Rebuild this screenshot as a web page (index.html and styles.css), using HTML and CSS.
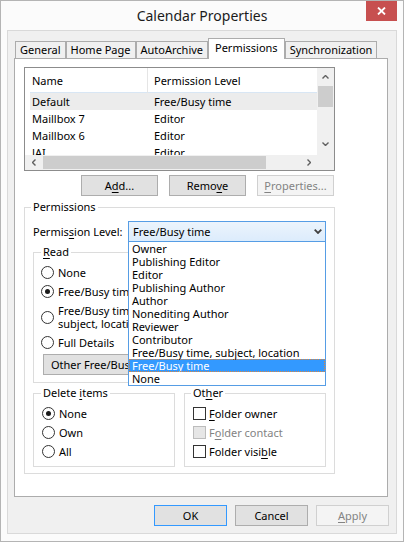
FILE: index.html
```html
<!DOCTYPE html>
<html lang="en">
<head>
    <meta charset="UTF-8">
    <title>Calendar Properties</title>
    <link rel="stylesheet" href="styles.css">
</head>
<body>
<div class="window">
    <div class="titlebar">
        <span class="title">Calendar Properties</span>
        <div class="close">
            <svg width="9" height="8" viewBox="0 0 9 8"><path d="M1 0.5 L8 7.5 M8 0.5 L1 7.5"/></svg>
        </div>
    </div>

    <div class="client">
        <div class="tabs">
            <div class="tab">General</div>
            <div class="tab">Home Page</div>
            <div class="tab">AutoArchive</div>
            <div class="tab active">Permissions</div>
            <div class="tab">Synchronization</div>
        </div>

        <div class="panel">
            <div class="panel-body">
                <div class="listview">
                    <div class="list-body">
                        <div class="list-head">
                            <span>Name</span>
                            <span>Permission Level</span>
                        </div>
                        <div class="list-row selected"><span>Default</span><span>Free/Busy time</span></div>
                        <div class="list-row"><span>Maillbox 7</span><span>Editor</span></div>
                        <div class="list-row"><span>Maillbox 6</span><span>Editor</span></div>
                        <div class="list-row"><span>JAI</span><span>Editor</span></div>
                    </div>
                    <div class="vscroll">
                        <div class="sb-up"><svg class="arrow" width="7" height="4" viewBox="0 0 7 4"><path d="M0.5 3.5 L3.5 0.5 L6.5 3.5"/></svg></div>
                        <div class="sb-thumb-v"></div>
                        <div class="sb-fill"></div>
                        <div class="sb-down"><svg class="arrow" width="7" height="4" viewBox="0 0 7 4"><path d="M0.5 0.5 L3.5 3.5 L6.5 0.5"/></svg></div>
                    </div>
                    <div class="hscroll">
                        <div class="sb-left"><svg class="arrow" width="4" height="7" viewBox="0 0 4 7"><path d="M3.5 0.5 L0.5 3.5 L3.5 6.5"/></svg></div>
                        <div class="sb-thumb-h"></div>
                        <div class="sb-fill"></div>
                        <div class="sb-right"><svg class="arrow" width="4" height="7" viewBox="0 0 4 7"><path d="M0.5 0.5 L3.5 3.5 L0.5 6.5"/></svg></div>
                    </div>
                    <div class="sb-corner"></div>
                </div>

                <div class="list-buttons">
                    <button class="btn">A<u>d</u>d...</button>
                    <button class="btn">Remo<u>v</u>e</button>
                    <button class="btn disabled"><u>P</u>roperties...</button>
                </div>

                <fieldset class="group perms">
                    <legend>Permissions</legend>

                    <div class="level-row">
                        <span class="level-label">Permis<u>s</u>ion Level:</span>
                        <div class="combo">
                            <span class="combo-value">Free/Busy time</span>
                            <svg class="chevron" width="8" height="5" viewBox="0 0 8 5"><path d="M0.7 0.7 L4 4 L7.3 0.7"/></svg>
                            <ul class="dropdown">
                                <li>Owner</li>
                                <li>Publishing Editor</li>
                                <li>Editor</li>
                                <li>Publishing Author</li>
                                <li>Author</li>
                                <li>Nonediting Author</li>
                                <li>Reviewer</li>
                                <li>Contributor</li>
                                <li>Free/Busy time, subject, location</li>
                                <li class="hover">Free/Busy time</li>
                                <li>None</li>
                            </ul>
                        </div>
                    </div>

                    <fieldset class="group read">
                        <legend><u>R</u>ead</legend>
                        <label class="radio"><span class="dot"></span>None</label>
                        <label class="radio"><span class="dot on"></span>Free/Busy time</label>
                        <label class="radio two-line"><span class="dot"></span><span>Free/Busy time,<br>subject, location</span></label>
                        <label class="radio full"><span class="dot"></span>Full Details</label>
                        <button class="btn other-btn">Other Free/Busy...</button>
                    </fieldset>

                    <div class="sub-groups">
                        <fieldset class="group small delete">
                            <legend>Delete <u>i</u>tems</legend>
                            <label class="radio"><span class="dot on"></span>None</label>
                            <label class="radio"><span class="dot"></span>Own</label>
                            <label class="radio"><span class="dot"></span>All</label>
                        </fieldset>
                        <fieldset class="group small other">
                            <legend>Ot<u>h</u>er</legend>
                            <label class="check"><span class="box"></span><u>F</u>older owner</label>
                            <label class="check disabled"><span class="box"></span>F<u>o</u>lder contact</label>
                            <label class="check"><span class="box"></span>Folder visi<u>b</u>le</label>
                        </fieldset>
                    </div>
                </fieldset>
            </div>
        </div>

        <div class="dialog-buttons">
            <button class="btn default">OK</button>
            <button class="btn">Cancel</button>
            <button class="btn disabled"><u>A</u>pply</button>
        </div>
    </div>
</div>
</body>
</html>
```

FILE: styles.css
```css
* {
    box-sizing: border-box;
    margin: 0;
    padding: 0;
}

body {
    font-family: "Noto Sans", "Open Sans", sans-serif;
    font-size: 11px;
    color: #000;
    background: #fff;
}

u {
    text-decoration-thickness: 1px;
    text-underline-offset: 2px;
}

.window {
    width: 404px;
    height: 542px;
    border: 1px solid #b4b4b4;
    background: #fbfbfb;
    display: flex;
    flex-direction: column;
}

/* title bar */
.titlebar {
    height: 29px;
    display: grid;
    grid-template-columns: 1fr auto 1fr;
    align-items: center;
}

.title {
    grid-column: 2;
    font-size: 14px;
    color: #1b1b1b;
    padding-bottom: 1px;
}

.close {
    grid-column: 3;
    justify-self: end;
    align-self: start;
    width: 31px;
    height: 20px;
    margin-right: 6px;
    background: #c75050;
    display: flex;
    align-items: center;
    justify-content: center;
}

.close path {
    stroke: #fff;
    stroke-width: 1.8;
    fill: none;
}

/* client area */
.client {
    flex: 1;
    margin: 0 6px 7px;
    border: 1px solid #d9d9d9;
    background: #f0f0f0;
    padding: 7px 8px 7px 6px;
    display: flex;
    flex-direction: column;
}

.tabs {
    display: flex;
    align-items: flex-end;
    margin-left: 1px;
}

.tab {
    height: 17px;
    padding: 0 4px;
    border: 1px solid #acacac;
    border-bottom: none;
    background: #f0f0f0;
    line-height: 16px;
    white-space: nowrap;
}

.tab.active {
    height: 21px;
    margin-bottom: -1px;
    background: #fff;
    line-height: 17px;
    position: relative;
    z-index: 1;
    padding: 0 6px;
}

.panel {
    flex: 1;
    border: 1px solid #acacac;
    background: #fff;
    padding: 8px 0 0 9px;
}

.panel-body {
    width: 311px;
}

/* list view */
.listview {
    height: 104px;
    border: 1px solid #8c8c8c;
    display: grid;
    grid-template-columns: 1fr 17px;
    grid-template-rows: 1fr 15px;
}

.list-body {
    overflow: hidden;
    padding-left: 5px;
}

.list-head,
.list-row {
    display: grid;
    grid-template-columns: 118px 1fr;
}

.list-head {
    height: 25px;
    line-height: 25px;
}

.list-head span:first-child {
    border-right: 1px solid #e5e5e5;
}

.list-row {
    height: 17px;
    line-height: 17px;
}

.list-head span,
.list-row span {
    padding-left: 2px;
    white-space: nowrap;
}

.list-head span + span,
.list-row span + span {
    padding-left: 6px;
}

.list-row.selected {
    background: #ececec;
    box-shadow: 0 -1px 0 #d8e6f4;
}

.vscroll,
.hscroll,
.sb-corner {
    background: #f0f0f0;
}

.vscroll {
    display: flex;
    flex-direction: column;
}

.hscroll {
    display: flex;
}

.sb-up,
.sb-down,
.sb-left,
.sb-right {
    display: flex;
    align-items: center;
    justify-content: center;
}

.sb-up { height: 18px; }
.sb-down { height: 22px; }
.sb-left { width: 18px; }
.sb-right { width: 17px; }

.sb-fill {
    flex: 1;
}

.sb-thumb-v {
    height: 21px;
    margin: 0 1px;
    background: #cdcdcd;
}

.sb-thumb-h {
    width: 223px;
    margin: 1px 0;
    background: #cdcdcd;
}

.arrow path {
    fill: none;
    stroke: #606060;
    stroke-width: 1.4;
}

/* buttons */
.btn {
    width: 77px;
    height: 21px;
    border: 1px solid #adadad;
    background: #e1e1e1;
    font: inherit;
    color: #000;
}

.btn.disabled {
    background: #f4f4f4;
    border-color: #d0d0d0;
    color: #838383;
}

.btn.default {
    border-color: #3399ff;
}

.list-buttons {
    display: flex;
    justify-content: flex-end;
    gap: 11px;
    margin-top: 4px;
    padding-right: 1px;
}

/* group boxes */
.group {
    border: 1px solid #dcdcdc;
}

.group legend {
    padding: 0 2px;
    line-height: 16px;
}

.perms {
    margin-top: 3px;
    padding: 6px 8px 6px 8px;
}

.perms > legend {
    margin-left: -2px;
}

.level-row {
    display: flex;
    align-items: center;
}

.level-label {
    flex: 0 0 95px;
}

.combo {
    flex: 1;
    height: 21px;
    position: relative;
    border: 1px solid #569de5;
    background: linear-gradient(#ecf4fc, #dcecfc);
    display: flex;
    align-items: center;
    padding-left: 4px;
}

.combo-value {
    flex: 1;
}

.chevron {
    margin-right: 3px;
}

.chevron path {
    fill: none;
    stroke: #404040;
    stroke-width: 1.8;
}

.dropdown {
    list-style: none;
    position: absolute;
    top: 19px;
    left: -1px;
    right: -1px;
    z-index: 5;
    background: #fff;
    border: 1px solid #569de5;
}

.dropdown li {
    height: 13px;
    line-height: 13px;
    padding-left: 3px;
    white-space: nowrap;
}

.dropdown li.hover {
    background: #3399ff;
    color: #fff;
    outline: 1px dotted #e0863a;
    outline-offset: -1px;
}

.read {
    margin-top: 2px;
    padding: 3px 8px 7px 7px;
}

.radio,
.check {
    display: flex;
    align-items: center;
    height: 19px;
    white-space: nowrap;
}

.dot {
    flex: none;
    width: 13px;
    height: 13px;
    border: 1px solid #333;
    border-radius: 50%;
    background: #fff;
    margin-right: 4px;
    display: flex;
    align-items: center;
    justify-content: center;
}

.dot.on::after {
    content: "";
    width: 5px;
    height: 5px;
    border-radius: 50%;
    background: #1a1a1a;
}

.radio.two-line {
    height: 26px;
    line-height: 13px;
    margin-top: 3px;
}

.radio.full {
    margin-top: 3px;
}

.other-btn {
    width: 150px;
    margin: 2px 0 0 2px;
    text-align: left;
    padding-left: 7px;
}

.sub-groups {
    display: grid;
    grid-template-columns: 1fr 1fr;
    gap: 9px;
    margin-top: 2px;
}

.small {
    padding: 3px 8px 5px 8px;
}

.delete legend {
    margin-left: -1px;
}

.other legend {
    margin-left: -2px;
}

.box {
    flex: none;
    width: 13px;
    height: 13px;
    border: 1px solid #333;
    background: #fff;
    margin-right: 3px;
}

.check.disabled {
    color: #838383;
}

.check.disabled .box {
    background: #e6e6e6;
    border-color: #bcbcbc;
}

.dialog-buttons {
    display: flex;
    justify-content: flex-end;
    gap: 8px;
    margin-top: 8px;
    margin-right: -1px;
}

.dialog-buttons .btn {
    width: 73px;
}
```
